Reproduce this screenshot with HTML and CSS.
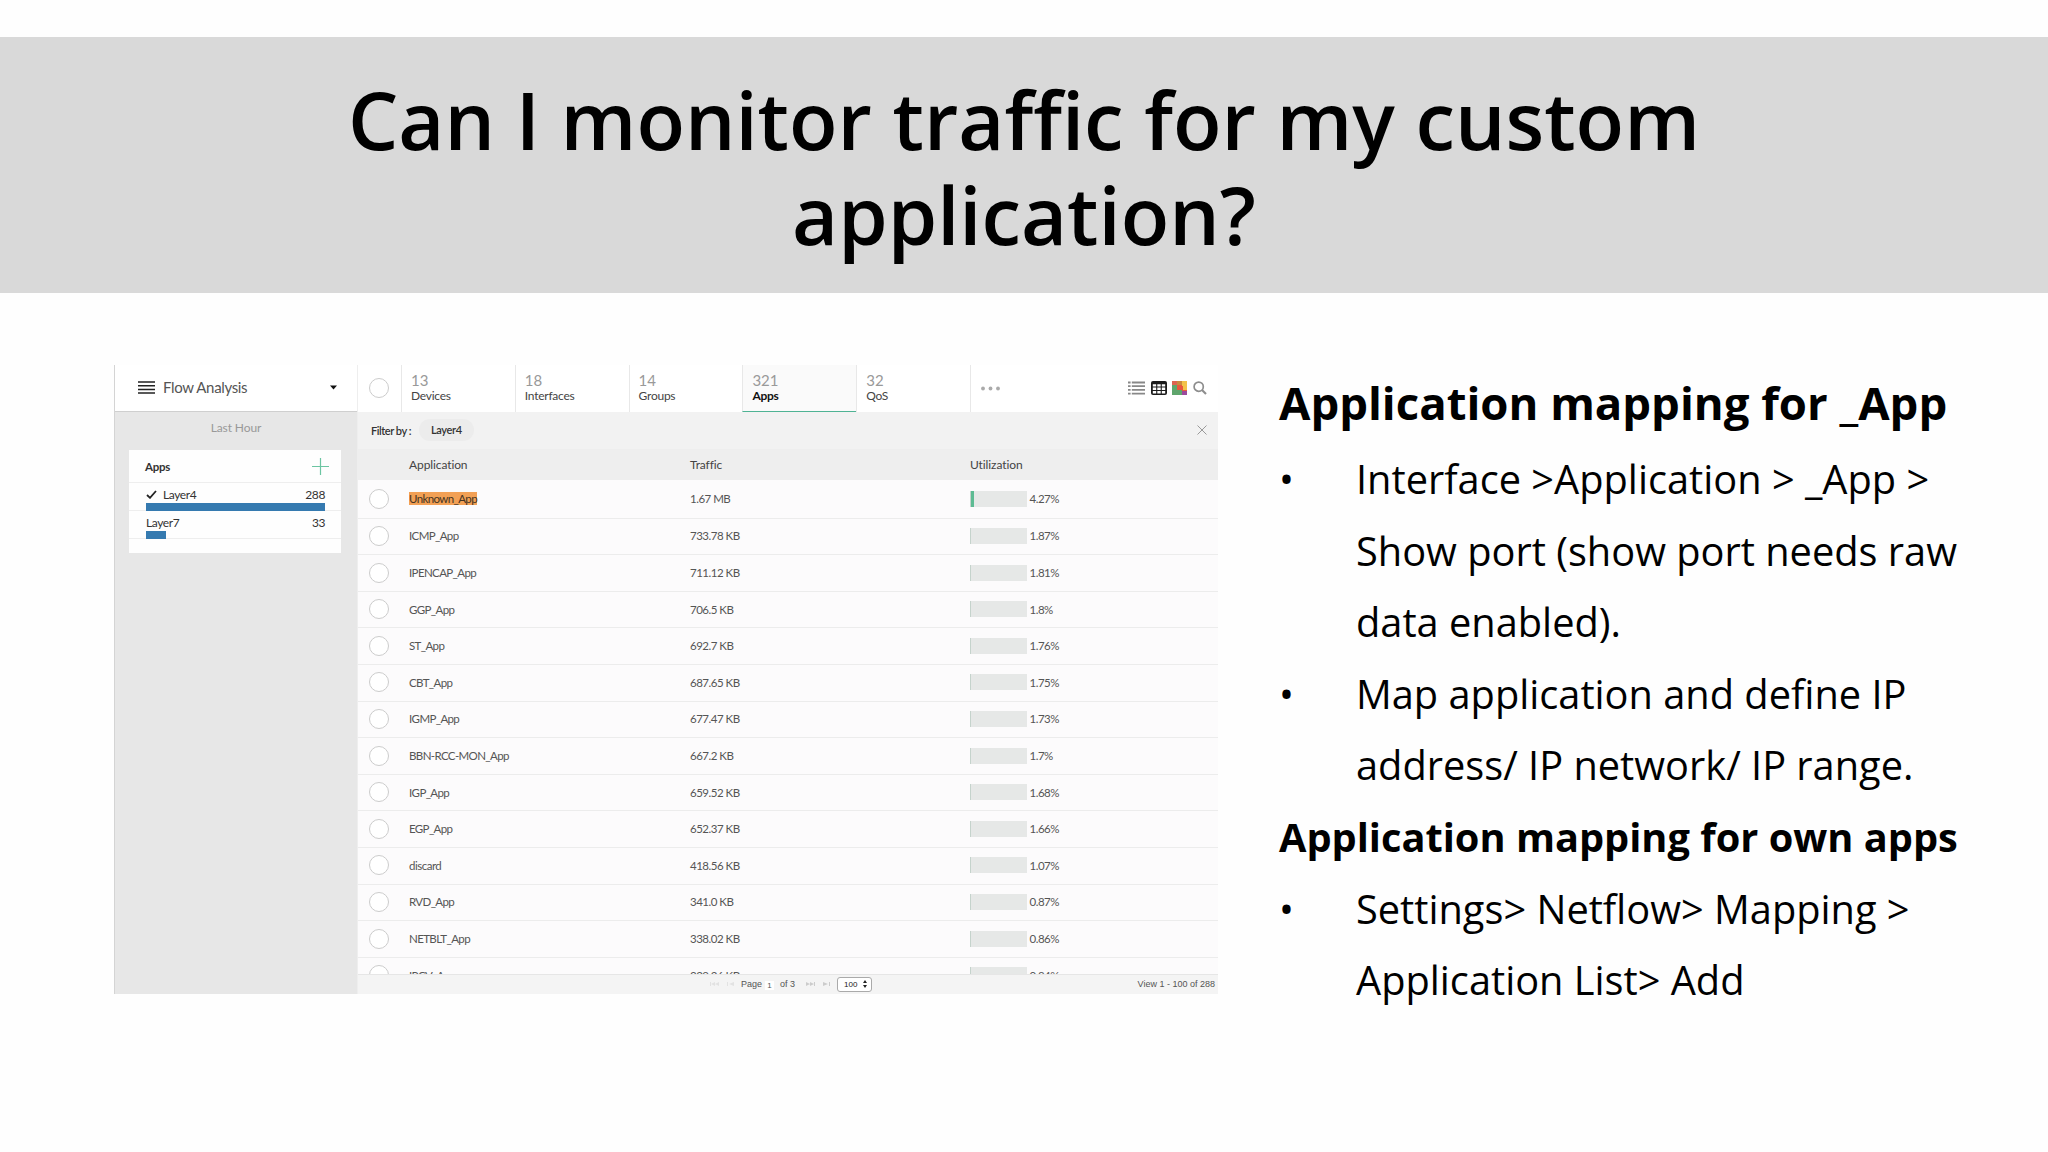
FILE: index.html
```html
<!DOCTYPE html>
<html lang="en">
<head>
    <meta charset="UTF-8">
    <meta name="viewport" content="width=device-width, initial-scale=1.0">
    <title>Can I monitor traffic for my custom application?</title>
    <link rel="stylesheet" href="styles.css">
</head>
<body>

    <!-- Title banner -->
    <div class="banner">
        <h1>Can I monitor traffic for my custom<br>application?</h1>
    </div>

    <div class="content">

        <!-- Flow analysis panel -->
        <div class="panel">
            <div class="sidebar">
                <div class="side-head">
                    <svg class="menu-icon" width="17" height="13" viewBox="0 0 17 13"><path d="M0 1h17M0 4.7h17M0 8.4h17M0 12.1h17" stroke="#222" stroke-width="1.5"/></svg>
                    <span class="side-title">Flow Analysis</span>
                    <svg class="caret" width="7" height="5" viewBox="0 0 7 5"><path d="M0 .5h7L3.5 4.5z" fill="#111"/></svg>
                </div>
                <div class="last-hour">Last Hour</div>
                <div class="card">
                    <div class="card-head">
                        <span>Apps</span>
                        <svg width="17" height="17" viewBox="0 0 17 17"><path d="M8.5 0v17M0 8.5h17" stroke="#6cc5a2" stroke-width="1.2"/></svg>
                    </div>
                    <div class="layer">
                        <div class="layer-text">
                            <span><svg class="check" width="11" height="9" viewBox="0 0 11 9"><path d="M1 5l3 2.8L10 1" fill="none" stroke="#222" stroke-width="1.8"/></svg>Layer4</span>
                            <span>288</span>
                        </div>
                        <div class="layer-bar" style="width: 179px"></div>
                    </div>
                    <div class="layer">
                        <div class="layer-text"><span>Layer7</span><span>33</span></div>
                        <div class="layer-bar" style="width: 20px"></div>
                    </div>
                </div>
            </div>

            <div class="main">
                <div class="tabs">
                    <div class="tab-check"><span class="circle"></span></div>
                    <div class="tab"><span class="count">13</span><span class="name">Devices</span></div>
                    <div class="tab"><span class="count">18</span><span class="name">Interfaces</span></div>
                    <div class="tab"><span class="count">14</span><span class="name">Groups</span></div>
                    <div class="tab active"><span class="count">321</span><span class="name">Apps</span></div>
                    <div class="tab"><span class="count">32</span><span class="name">QoS</span></div>
                    <div class="tab-more">
                        <svg width="19" height="5" viewBox="0 0 19 5" fill="#aaa"><circle cx="2" cy="2.5" r="1.9"/><circle cx="9.5" cy="2.5" r="1.9"/><circle cx="17" cy="2.5" r="1.9"/></svg>
                    </div>
                    <div class="tools">
                        <svg width="17" height="14" viewBox="0 0 17 14"><path d="M0 1.5h2.6M0 5.2h2.6M0 8.9h2.6M0 12.6h2.6M3.8 1.5H17M3.8 5.2H17M3.8 8.9H17M3.8 12.6H17" stroke="#888" stroke-width="1.8"/></svg>
                        <svg width="16" height="14" viewBox="0 0 16 14"><rect width="16" height="14" rx="2" fill="#1b1b1b"/><path d="M1.8 3.2h3.4v2.4H1.8zM6.3 3.2h3.4v2.4H6.3zM10.8 3.2h3.4v2.4h-3.4zM1.8 6.6h3.4V9H1.8zM6.3 6.6h3.4V9H6.3zM10.8 6.6h3.4V9h-3.4zM1.8 10h3.4v2.4H1.8zM6.3 10h3.4v2.4H6.3zM10.8 10h3.4v2.4h-3.4z" fill="#fff"/></svg>
                        <svg width="15" height="14" viewBox="0 0 15 14"><path d="M0 0h15v14H0z" fill="#e8573f"/><path d="M0 4h5v5h5v5H0z" fill="#5fa56c"/><path d="M5 0h5v4H5z" fill="#c98a3f"/><path d="M10 0h5v9h-4V5h-1z" fill="#f3c24a"/><path d="M0 0h5v4H0z" fill="#dd6350"/><path d="M10 10h5v4h-5z" fill="#9b4a9c"/></svg>
                        <svg width="14" height="14" viewBox="0 0 14 14" fill="none" stroke="#8d8d8d"><circle cx="5.7" cy="5.7" r="4.6" stroke-width="1.7"/><path d="M9 9l4 4" stroke-width="2.2"/></svg>
                    </div>
                </div>

                <div class="filter">
                    <span class="filter-label">Filter by :</span>
                    <span class="chip">Layer4</span>
                    <svg class="close" width="10" height="10" viewBox="0 0 10 10"><path d="M.5.5l9 9M9.5.5l-9 9" stroke="#999" stroke-width="1"/></svg>
                </div>

                <div class="table-head">
                    <span>Application</span><span>Traffic</span><span>Utilization</span>
                </div>

                <div class="rows">
                    <div class="row first"><i class="circle"></i><span class="app"><mark>Unknown_App</mark></span><span>1.67 MB</span><b class="meter"><em style="width: 2.5px"></em></b><span>4.27%</span></div>
                    <div class="row"><i class="circle"></i><span class="app">ICMP_App</span><span>733.78 KB</span><b class="meter"></b><span>1.87%</span></div>
                    <div class="row"><i class="circle"></i><span class="app">IPENCAP_App</span><span>711.12 KB</span><b class="meter"></b><span>1.81%</span></div>
                    <div class="row"><i class="circle"></i><span class="app">GGP_App</span><span>706.5 KB</span><b class="meter"></b><span>1.8%</span></div>
                    <div class="row"><i class="circle"></i><span class="app">ST_App</span><span>692.7 KB</span><b class="meter"></b><span>1.76%</span></div>
                    <div class="row"><i class="circle"></i><span class="app">CBT_App</span><span>687.65 KB</span><b class="meter"></b><span>1.75%</span></div>
                    <div class="row"><i class="circle"></i><span class="app">IGMP_App</span><span>677.47 KB</span><b class="meter"></b><span>1.73%</span></div>
                    <div class="row"><i class="circle"></i><span class="app">BBN-RCC-MON_App</span><span>667.2 KB</span><b class="meter"></b><span>1.7%</span></div>
                    <div class="row"><i class="circle"></i><span class="app">IGP_App</span><span>659.52 KB</span><b class="meter"></b><span>1.68%</span></div>
                    <div class="row"><i class="circle"></i><span class="app">EGP_App</span><span>652.37 KB</span><b class="meter"></b><span>1.66%</span></div>
                    <div class="row"><i class="circle"></i><span>discard</span><span>418.56 KB</span><b class="meter"></b><span>1.07%</span></div>
                    <div class="row"><i class="circle"></i><span class="app">RVD_App</span><span>341.0 KB</span><b class="meter"></b><span>0.87%</span></div>
                    <div class="row"><i class="circle"></i><span class="app">NETBLT_App</span><span>338.02 KB</span><b class="meter"></b><span>0.86%</span></div>
                    <div class="row"><i class="circle"></i><span class="app">IPCV_App</span><span>329.26 KB</span><b class="meter"></b><span>0.84%</span></div>
                </div>

                <div class="pager">
                    <svg width="26" height="6" viewBox="0 0 26 6" fill="#e2e2e2"><path d="M0 1h1v4H0zM5 1v4L1 3zM9 1v4L5 3zM17 1h1v4h-1zM24 1v4l-5-2z"/></svg>
                    <span class="page-word">Page</span>
                    <span class="page-no">1</span>
                    <span class="page-of">of 3</span>
                    <svg width="26" height="6" viewBox="0 0 26 6" fill="#ccc"><path d="M0 1v4l4-2zM4 1v4l4-2zM8 1h1v4H8zM17 1v4l5-2zM23 1h1v4h-1z"/></svg>
                    <span class="page-size">100<svg width="4" height="8" viewBox="0 0 4 8"><path d="M0 3h4L2 0zM0 5h4L2 8z" fill="#222"/></svg></span>
                    <span class="view">View 1 - 100 of 288</span>
                </div>
            </div>
        </div>

        <!-- Notes on the right -->
        <div class="notes">
            <h2>Application mapping for _App</h2>
            <ul>
                <li>Interface &gt;Application &gt; _App &gt;<br>Show port (show port needs raw<br>data enabled).</li>
                <li>Map application and define IP<br>address/ IP network/ IP range.</li>
            </ul>
            <h3>Application mapping for own apps</h3>
            <ul>
                <li>Settings&gt; Netflow&gt; Mapping &gt;<br>Application List&gt; Add</li>
            </ul>
        </div>
    </div>

</body>
</html>
```

FILE: styles.css
```css
* {
    box-sizing: border-box;
}

body {
    margin: 0;
    padding-top: 37px;
    height: 1152px;
    overflow: hidden;
    background-color: #fefefe;
    font-family: "Open Sans", sans-serif;
    color: #000;
}

svg {
    display: block;
    flex: none;
}

/* Title banner */
.banner {
    height: 256px;
    padding-top: 35px;
    background-color: #d9d9d9;
    text-align: center;
}

.banner h1 {
    margin: 0;
    font-size: 79.5px;
    font-weight: 600;
    line-height: 95px;
}

.content {
    display: flex;
    align-items: flex-start;
    padding: 72px 0 0 114px;
}

/* Flow analysis panel */
.panel {
    display: flex;
    width: 1104px;
    height: 629px;
    font-family: Lato, sans-serif;
    font-size: 12px;
    color: #555;
}

.sidebar {
    width: 243px;
    background-color: #e7e7e7;
    border-left: 1px solid #d4d4d4;
}

.side-head {
    display: flex;
    align-items: center;
    height: 47px;
    padding: 0 20px 2px 23px;
    background-color: #fff;
    border-bottom: 1px solid #cfcfcf;
}

.side-title {
    flex: 1;
    margin-left: 8px;
    font-size: 15px;
    letter-spacing: -0.35px;
    color: #555;
}

.last-hour {
    padding-top: 8px;
    height: 38px;
    font-size: 12px;
    line-height: 16px;
    letter-spacing: -0.1px;
    text-align: center;
    color: #999;
}

.card {
    width: 212px;
    height: 103px;
    margin-left: 14px;
    background-color: #fefefe;
    color: #333;
}

.card-head {
    display: flex;
    justify-content: space-between;
    align-items: center;
    height: 33px;
    padding: 0 12px 0 16px;
    border-bottom: 1px solid #eee;
    font-weight: bold;
    font-size: 11.5px;
    letter-spacing: -0.3px;
}

.layer {
    height: 28px;
    padding: 4px 16px 0 17px;
    border-bottom: 1px solid #eee;
}

.layer-text {
    display: flex;
    justify-content: space-between;
    height: 16px;
    line-height: 16px;
    font-size: 12px;
    letter-spacing: -0.4px;
}

.check {
    display: inline-block;
    margin-right: 6px;
}

.layer-bar {
    height: 8px;
    background-color: #357ab0;
}

.main {
    width: 861px;
    border-left: 1px solid #eee;
    background-color: #fcfbfc;
}

/* Tabs */
.tabs {
    display: flex;
    height: 47px;
    background-color: #fff;
}

.tab-check {
    width: 43px;
    padding: 13px 0 0 11px;
}

.circle {
    display: block;
    width: 20px;
    height: 20px;
    border: 1px solid #ccc;
    border-radius: 50%;
    background-color: #fff;
}

.tab {
    display: flex;
    flex-direction: column;
    width: 113.8px;
    padding: 7px 0 0 9px;
    border-left: 1px solid #e8e8e8;
}

.count {
    font-size: 15px;
    line-height: 16px;
    color: #999;
}

.name {
    font-size: 12px;
    line-height: 15px;
    letter-spacing: -0.25px;
    color: #444;
}

.active {
    background-color: #fafafa;
    border-bottom: 1.5px solid #4fb394;
}

.active .name {
    font-weight: bold;
    color: #111;
}

.tab-more {
    width: 158.5px;
    padding: 21px 0 0 10px;
    border-left: 1px solid #e8e8e8;
}

.tools {
    display: flex;
    gap: 5.5px;
    padding-top: 16px;
}

/* Filter and table */
.filter {
    display: flex;
    align-items: center;
    height: 37px;
    padding: 0 11px 2px 13px;
    background-color: #f2f2f2;
    font-size: 11px;
    color: #333;
}

.filter-label {
    width: 48px;
    padding-top: 1px;
    font-weight: 600;
    letter-spacing: -0.45px;
    white-space: nowrap;
}

.chip {
    height: 22px;
    padding: 0 12px;
    border-radius: 11px;
    background-color: #ececec;
    font-weight: 600;
    line-height: 22px;
    letter-spacing: -0.35px;
}

.close {
    margin-left: auto;
}

.table-head {
    display: grid;
    grid-template-columns: 281px 280px auto;
    height: 31px;
    padding-left: 51px;
    background-color: #eeeeee;
    font-size: 12px;
    line-height: 31px;
    letter-spacing: -0.1px;
    color: #444;
}

.rows {
    height: 493.5px;
    overflow: hidden;
}

.row {
    display: grid;
    grid-template-columns: 40px 281px 280px 59.5px auto;
    align-items: center;
    height: 36.6px;
    padding: 0 0 1px 11px;
    border-bottom: 1px solid #ececec;
    font-size: 11.5px;
    letter-spacing: -0.5px;
}

.first {
    height: 38.7px;
    padding-bottom: 0;
}

.app {
    letter-spacing: -0.62px;
}

mark {
    background-color: #f2a055;
    color: #443322;
}

.meter {
    width: 57px;
    height: 16px;
    background-color: #e6e8e7;
    border-left: 1px solid #c5d3cc;
}

.meter em {
    display: block;
    height: 16px;
    background-color: #5dbb93;
}

/* Pager */
.pager {
    display: flex;
    align-items: center;
    height: 20.5px;
    padding: 0 3px 0 352px;
    background-color: #f4f4f4;
    border-top: 1px solid #e6e6e6;
    font-family: "Liberation Sans", sans-serif;
    font-size: 9px;
    color: #555;
}

.page-word {
    margin-left: 5px;
}

.page-no {
    width: 9px;
    margin: 2px 6px 0 3px;
    background-color: #fff;
    font-size: 8px;
    text-align: center;
}

.page-of {
    margin-right: 11px;
}

.page-size {
    display: flex;
    align-items: center;
    justify-content: space-between;
    width: 35px;
    height: 15px;
    margin-left: 5px;
    padding: 0 4px 0 6px;
    border: 1px solid #aaa;
    border-radius: 3px;
    background-color: #fff;
    font-size: 8px;
    color: #222;
}

.view {
    margin-left: auto;
}

/* Notes */
.notes {
    margin-left: 61px;
    font-size: 39.75px;
    line-height: 71.6px;
    white-space: nowrap;
}

.notes h2 {
    margin: 0 0 4px;
    font-size: 45.5px;
    line-height: 75px;
}

.notes h3 {
    margin: 0;
    font-size: 39.75px;
}

.notes ul {
    margin: 0;
    padding: 0;
    list-style: none;
}

.notes li {
    display: flex;
}

.notes li::before {
    content: "•";
    width: 77px;
    flex: none;
}
```
